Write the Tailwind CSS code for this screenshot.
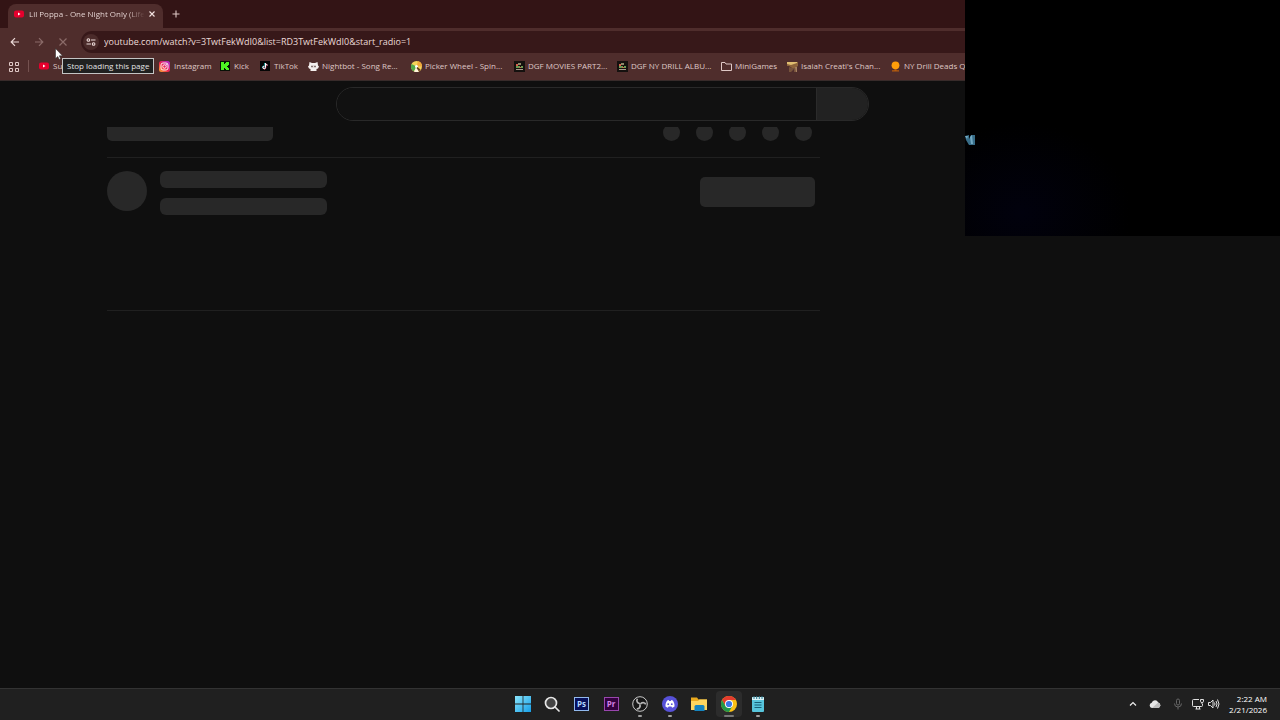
<!DOCTYPE html>
<html lang="en">

<head>
  <meta charset="UTF-8" />
  <meta name="viewport" content="width=device-width, initial-scale=1.0" />
  <script src="https://cdn.jsdelivr.net/npm/@tailwindcss/browser@4"></script>
  <title>Lil Poppa - One Night Only</title>
</head>

<body class="bg-[#0f0f0f] font-['Open_Sans','Noto_Sans',sans-serif] text-[8px] leading-3 text-[#dfc8c6]">
  <div class="relative flex min-h-screen flex-col overflow-hidden">

    <!-- tab strip -->
    <div class="flex h-7 items-end bg-[#331415] pl-2">
      <div class="flex h-6 w-[155px] items-center rounded-t-lg bg-[#4f2d2c] pr-[7px] pb-1 pl-[6px]">
        <svg class="h-[10px] w-[10px] shrink-0" viewBox="0 0 20 20">
          <rect x="0" y="3" width="20" height="14" rx="4" fill="#e6002d" />
          <path d="M8 7l5 3-5 3z" fill="#fff" />
        </svg>
        <span class="ml-[5px] bg-linear-to-r from-[#f3e3e1] from-85% to-[#4f2d2c] bg-clip-text whitespace-nowrap text-transparent">Lil Poppa - One Night Only (Life</span>
        <button type="button" aria-label="Close tab" class="ml-auto">
          <svg class="h-2 w-2" viewBox="0 0 8 8" fill="none" stroke="#f3e3e1" stroke-width="1.1">
            <path d="M1.500 1.500l5 5M6.500 1.500l-5 5" />
          </svg>
        </button>
      </div>
      <button type="button" aria-label="New tab" class="mb-[9px] ml-2">
        <svg class="h-[10px] w-[10px]" viewBox="0 0 10 10" fill="none" stroke="#dfc8c6" stroke-width="1.1">
          <path d="M5 1.500v7M1.500 5h7" />
        </svg>
      </button>
    </div>

    <!-- toolbar -->
    <div class="flex h-7 items-center bg-[#4f2d2c] pl-[9px]">
      <button type="button" aria-label="Back" class="mr-3">
        <svg class="h-3 w-3" viewBox="0 0 12 12" fill="none" stroke="#ecdad8" stroke-width="1.200">
          <path d="M10 6H2.500M6 2.200L2.200 6 6 9.800" />
        </svg>
      </button>
      <button type="button" aria-label="Forward" class="mr-3">
        <svg class="h-3 w-3" viewBox="0 0 12 12" fill="none" stroke="#8b6b69" stroke-width="1.200">
          <path d="M2 6h7.500M6 2.200L9.800 6 6 9.800" />
        </svg>
      </button>
      <button type="button" aria-label="Stop" class="mr-3">
        <svg class="h-3 w-3" viewBox="0 0 12 12" fill="none" stroke="#8b6b69" stroke-width="1.200">
          <path d="M2.500 2.500l7 7M9.500 2.500l-7 7" />
        </svg>
      </button>
      <div class="flex h-[22px] flex-1 items-center rounded-l-full bg-[#371819] pl-[2px]">
        <button type="button" aria-label="Site information" class="flex h-4 w-4 items-center justify-center rounded-full bg-[#4b2b2a]">
          <svg class="h-[10px] w-[10px]" viewBox="0 0 10 10" fill="none" stroke="#ecdad8" stroke-width="1.100">
            <path d="M5 3h4.500M.5 7H5" />
            <circle cx="2.400" cy="3" r="1.300" />
            <circle cx="7.600" cy="7" r="1.300" />
          </svg>
        </button>
        <input type="text" aria-label="Address" class="ml-[5px] w-[420px] bg-transparent text-[9px] leading-4 text-[#ecdad8] outline-none"
          value="youtube.com/watch?v=3TwtFekWdI0&amp;list=RD3TwtFekWdI0&amp;start_radio=1" />
      </div>
    </div>

    <!-- bookmarks -->
    <nav class="flex h-[25px] items-center border-b border-[#382b2a] bg-[#4f2d2c] pb-1 pl-2 whitespace-nowrap">
      <button type="button" aria-label="Apps">
        <svg class="h-[11px] w-[11px]" viewBox="0 0 11 11" fill="none" stroke="#dfc8c6">
          <path d="M1.500 1.500h3v3h-3zM7.500 1.500h3v3h-3zM1.500 7.500h3v3h-3zM7.500 7.500h3v3h-3z" />
        </svg>
      </button>
      <span class="mr-[10px] ml-[9px] h-3 w-px bg-[#755250]"></span>
      <div class="flex gap-[11px]">
        <a href="#" class="flex w-[109px] items-center gap-1">
          <svg class="h-[10px] w-[10px]" viewBox="0 0 20 20">
            <rect x="0" y="3" width="20" height="14" rx="4" fill="#e6002d" />
            <path d="M8 7l5 3-5 3z" fill="#fff" />
          </svg>
          <span>Su</span>
        </a>
        <a href="#" class="flex w-[50px] items-center gap-1">
          <svg class="h-[11px] w-[11px] shrink-0" viewBox="0 0 22 22" fill="none" stroke="#fff" stroke-width="1.800">
            <defs>
              <linearGradient id="insta" x1="0" y1="1" x2="1" y2="0">
                <stop offset="0" stop-color="#ffb52e" />
                <stop offset=".45" stop-color="#f0254f" />
                <stop offset="1" stop-color="#a52bdc" />
              </linearGradient>
            </defs>
            <rect width="22" height="22" rx="5" fill="url(#insta)" stroke="none" />
            <rect x="4" y="4" width="14" height="14" rx="4" />
            <circle cx="11" cy="11" r="3.500" />
            <circle cx="15.200" cy="6.800" r=".6" />
          </svg>
          <span>Instagram</span>
        </a>
        <a href="#" class="flex w-[29px] items-center gap-1">
          <svg class="h-[10px] w-[10px] shrink-0" viewBox="0 0 10 10">
            <rect width="10" height="10" fill="#071006" />
            <path d="M1 1h3v2h1V2h1V1h3v3H8v1H7v1h1v1h1v2H6V8H5V7H4v2H1z" fill="#4df322" />
          </svg>
          <span>Kick</span>
        </a>
        <a href="#" class="flex w-[37px] items-center gap-1">
          <svg class="h-[10px] w-[10px] shrink-0" viewBox="0 0 20 20" fill="none" stroke-width="2">
            <rect width="20" height="20" fill="#050505" />
            <path d="M10 4v8.500a2.500 2.500 0 1 1-2.500-2.500M10 4c0 2 2 3.500 4 3.500" stroke="#25e6e0" />
            <path d="M11.500 5v8.500A2.500 2.500 0 1 1 9 11M11.500 5c0 2 2 3.500 4 3.500" stroke="#f22b55" />
            <path d="M11 4.500V13a2.500 2.500 0 1 1-2.500-2.500M11 4.500c0 2 2 3.500 4 3.500" stroke="#fff" />
          </svg>
          <span>TikTok</span>
        </a>
        <a href="#" class="flex w-[92px] items-center gap-[3px]">
          <svg class="h-[11px] w-[11px] shrink-0" viewBox="0 0 22 22">
            <path d="M3 2l5 2h6l5-2 1 7 2 2-2 4-3 1v4H5v-4l-3-1-2-4 2-2z" fill="#f4efee" />
            <path d="M6 8h10v6H6z" fill="#e4dbda" />
            <circle cx="8" cy="11" r="1.300" fill="#3b2524" />
            <circle cx="14" cy="11" r="1.300" fill="#3b2524" />
          </svg>
          <span>Nightbot - Song Re...</span>
        </a>
        <a href="#" class="flex w-[92px] items-center gap-[3px]">
          <svg class="h-[11px] w-[11px] shrink-0" viewBox="0 0 22 22">
            <circle cx="11" cy="11" r="11" fill="#f4d35a" />
            <path d="M11 11L1 6a11 11 0 0 0 5 15z" fill="#51a84b" />
            <path d="M11 11l-5 10a11 11 0 0 0 10 0z" fill="#fff6dd" />
            <path d="M11 11L14 0a11 11 0 0 1 8 11z" fill="#f1a83b" />
            <circle cx="11" cy="11" r="3" fill="#fff" />
            <path d="M13 12l6 5-3 4-5-7z" fill="#623d20" />
          </svg>
          <span>Picker Wheel - Spin...</span>
        </a>
        <a href="#" class="flex w-[92px] items-center gap-[3px]">
          <svg class="h-[11px] w-[11px] shrink-0" viewBox="0 0 11 11">
            <rect width="11" height="11" fill="#15110f" />
            <path d="M2 3h2v2H2z" fill="#d75a4a" />
            <path d="M4 2h3v2H4z" fill="#8f8a69" />
            <path d="M2 5h4v2H2zM7 5h2v2H7z" fill="#6b9c54" />
            <path d="M2 8h7v1H2z" fill="#a99c8b" />
            <path d="M5 6h2v1H5z" fill="#c96d45" />
          </svg>
          <span>DGF MOVIES PART2...</span>
        </a>
        <a href="#" class="flex w-[93px] items-center gap-[3px]">
          <svg class="h-[11px] w-[11px] shrink-0" viewBox="0 0 11 11">
            <rect width="11" height="11" fill="#15110f" />
            <path d="M2 3h2v2H2z" fill="#d75a4a" />
            <path d="M4 2h3v2H4z" fill="#8f8a69" />
            <path d="M2 5h4v2H2zM7 5h2v2H7z" fill="#6b9c54" />
            <path d="M2 8h7v1H2z" fill="#a99c8b" />
            <path d="M5 6h2v1H5z" fill="#c96d45" />
          </svg>
          <span>DGF NY DRILL ALBU...</span>
        </a>
        <a href="#" class="flex w-[55px] items-center gap-[3px]">
          <svg class="h-[11px] w-[11px] shrink-0" viewBox="0 0 11 11" fill="none" stroke="#dfc8c6">
            <path d="M.5 9.500v-8H4l1 1.500h5.500v6.500z" stroke-linejoin="round" />
          </svg>
          <span>MiniGames</span>
        </a>
        <a href="#" class="flex w-[92px] items-center gap-[3px]">
          <svg class="h-[11px] w-[11px] shrink-0" viewBox="0 0 11 11">
            <path d="M0 1h11v4L8 7H5L2 5H0z" fill="#8d633b" />
            <path d="M0 1h10v1L4 4 0 3z" fill="#e0bd70" />
            <path d="M2 6l3 1h4v4H7V8L4 11H2z" fill="#76523b" />
            <path d="M8 6h2v5H9z" fill="#a78262" />
          </svg>
          <span>Isaiah Creati's Chan...</span>
        </a>
        <a href="#" class="flex items-center gap-[3px]">
          <svg class="h-[11px] w-[11px] shrink-0" viewBox="0 0 11 11">
            <circle cx="5.500" cy="4.300" r="3.900" fill="#ff9d0a" />
            <path d="M4.500 8h2v1.300H9V10.500H2V9.300h2.500z" fill="#b85c0c" />
          </svg>
          <span>NY Drill Deads Qu</span>
        </a>
      </div>
    </nav>

    <!-- search header -->
    <header class="h-[46px] pt-[6px] pl-[336px]">
      <form class="flex h-[34px] w-full max-w-[533px] overflow-hidden rounded-full border border-[#292929]">
        <input type="text" aria-label="Search" class="min-w-0 flex-1 bg-[#111111] px-4 outline-none" />
        <button type="button" aria-label="Submit search" class="w-[52px] border-l border-[#2b2b2b] bg-[#222222]"></button>
      </form>
    </header>

    <!-- loading skeleton -->
    <main class="ml-[107px] w-full max-w-[713px] flex-1">
      <div class="flex h-[31px] items-start justify-between border-b border-[#202020] pr-2">
        <div class="h-[14px] w-[166px] rounded-b-[5px] bg-[#282828]"></div>
        <div class="flex h-[14px] items-end gap-4 overflow-hidden">
          <div class="h-[17px] w-[17px] rounded-full bg-[#282828]"></div>
          <div class="h-[17px] w-[17px] rounded-full bg-[#282828]"></div>
          <div class="h-[17px] w-[17px] rounded-full bg-[#282828]"></div>
          <div class="h-[17px] w-[17px] rounded-full bg-[#282828]"></div>
          <div class="h-[17px] w-[17px] rounded-full bg-[#282828]"></div>
        </div>
      </div>
      <div class="flex h-[153px] items-start border-b border-[#202020] pt-[13px] pr-[5px]">
        <div class="h-10 w-10 rounded-full bg-[#282828]"></div>
        <div class="ml-[13px] space-y-[10px]">
          <div class="h-[17px] w-[167px] rounded-md bg-[#282828]"></div>
          <div class="h-[17px] w-[167px] rounded-md bg-[#282828]"></div>
        </div>
        <div class="mt-[6px] ml-auto h-[30px] w-[115px] rounded-[5px] bg-[#282828]"></div>
      </div>
    </main>

    <!-- taskbar -->
    <footer class="relative flex h-8 items-center justify-center border-t border-[#333333] bg-[#202020] pb-[2px] pl-px text-white">
      <div class="grid h-full w-[265px] grid-cols-9 items-center justify-items-center">
        <button type="button" aria-label="Start">
          <svg class="h-4 w-4" viewBox="0 0 16 16">
            <linearGradient id="win" x2="1" y2="1">
              <stop stop-color="#8be5fb" />
              <stop offset="1" stop-color="#169fe8" />
            </linearGradient>
            <path d="M0 0h7.600v7.600H0zM8.400 0H16v7.600H8.400zM0 8.400h7.600V16H0zM8.400 8.400H16V16H8.400z" fill="url(#win)" />
          </svg>
        </button>
        <button type="button" aria-label="Search apps">
          <svg class="h-4 w-4" viewBox="0 0 16 16" fill="#444" stroke="#e6e6e6" stroke-width="1.700">
            <circle cx="7" cy="7" r="5.500" />
            <path d="M11 11l4 4" stroke-linecap="round" />
          </svg>
        </button>
        <button type="button" aria-label="Photoshop" class="flex h-[14px] w-[15px] items-center justify-center border border-[#91b9ed] bg-[#07105b] font-bold text-[#b2d7ff]">Ps</button>
        <button type="button" aria-label="Premiere Pro" class="flex h-[14px] w-[15px] items-center justify-center border border-[#9946ad] bg-[#34003f] font-bold text-[#d382e8]">Pr</button>
        <button type="button" aria-label="OBS" class="relative flex h-full w-full items-center justify-center">
          <svg class="h-4 w-4" viewBox="0 0 16 16" fill="none">
            <circle cx="8" cy="8" r="7.300" fill="#171717" stroke="#c9c9c9" />
            <g stroke="#b5b5b5" stroke-width="1.700">
              <path d="M5.500 2.800a2.900 2.900 0 0 0 2.500 4.700" />
              <path d="M5.500 2.800a2.900 2.900 0 0 0 2.500 4.700" transform="rotate(120 8 8)" />
              <path d="M5.500 2.800a2.900 2.900 0 0 0 2.500 4.700" transform="rotate(240 8 8)" />
            </g>
          </svg>
          <span class="absolute bottom-[1px] h-[2px] w-1 rounded-full bg-[#a0a0a0]"></span>
        </button>
        <button type="button" aria-label="Discord" class="relative flex h-full w-full items-center justify-center">
          <svg class="h-4 w-4" viewBox="0 0 16 16">
            <circle cx="8" cy="8" r="8" fill="#5751d8" />
            <path d="M5.200 4.500l1.500-.4.500.8h1.600l.5-.8 1.500.4c1.400 2 1.900 3.900 1.700 6-.8.7-1.600 1-2.400 1.200l-.7-1.200H6.600l-.7 1.200c-.8-.2-1.600-.5-2.400-1.200-.2-2.100.3-4 1.700-6z" fill="#fff" />
            <circle cx="6.200" cy="8.200" r=".9" fill="#5751d8" />
            <circle cx="9.800" cy="8.200" r=".9" fill="#5751d8" />
          </svg>
          <span class="absolute bottom-[1px] h-[2px] w-1 rounded-full bg-[#a0a0a0]"></span>
        </button>
        <button type="button" aria-label="File Explorer">
          <svg class="h-4 w-4" viewBox="0 0 16 16">
            <path d="M0 1.500h6l1.500 2H16V14H0z" fill="#e9a91e" />
            <path d="M0 5l7-.1 1.500-1.400H16V14H0z" fill="#ffd75e" />
            <path d="M3.500 15v-4.500q0-1.500 1.500-1.500h7q1.500 0 1.500 1.500V15z" fill="#1685bf" />
          </svg>
        </button>
        <button type="button" aria-label="Chrome" class="relative flex h-[26px] w-[26px] items-center justify-center rounded bg-[#2c2c2c]">
          <svg class="h-4 w-4" viewBox="0 0 16 16">
            <circle cx="8" cy="8" r="8" fill="#fbc116" />
            <path d="M1.070 4A8 8 0 0 1 14.930 4H8L4.540 10z" fill="#e33b2e" />
            <path d="M1.070 4A8 8 0 0 0 8 16l3.460-6L8 11.500 4.540 10z" fill="#23984a" />
            <circle cx="8" cy="8" r="4" fill="#fff" />
            <circle cx="8" cy="8" r="3.100" fill="#3b78e7" />
          </svg>
          <span class="absolute bottom-0 h-[2px] w-[10px] rounded-full bg-[#777777]"></span>
        </button>
        <button type="button" aria-label="Notepad" class="relative flex h-full w-full items-center justify-center">
          <svg class="h-4 w-4" viewBox="0 0 16 16">
            <rect x="2" y="1" width="12" height="15" rx="1" fill="#57c5dc" />
            <path d="M2 2q0-1 1-1h10q1 0 1 1v2H2z" fill="#d9f3f8" />
            <path d="M4 0v3M6.700 0v3M9.300 0v3M12 0v3" stroke="#287a91" />
            <path d="M4.500 6.500h7M4.500 9h7M4.500 11.500h7" stroke="#176178" stroke-width="1.200" />
          </svg>
          <span class="absolute bottom-[1px] h-[2px] w-1 rounded-full bg-[#a0a0a0]"></span>
        </button>
      </div>

      <!-- system tray -->
      <div class="absolute top-0 right-[13px] bottom-[2px] flex items-center">
        <svg class="mr-3 h-2 w-2" viewBox="0 0 8 8" fill="none" stroke="#eee" stroke-width="1.200">
          <path d="M1 5.500l3-3 3 3" />
        </svg>
        <svg class="mr-3 h-3 w-3" viewBox="0 0 12 12">
          <path d="M3 10a2.700 2.700 0 0 1-.3-5.300 3.500 3.500 0 0 1 6.500-.3A2.900 2.900 0 0 1 9.200 10z" fill="#e6e6e6" />
          <path d="M3 10l6.200-5.600A2.900 2.900 0 0 1 9.200 10z" fill="#bdbdbd" />
        </svg>
        <svg class="mr-[9px] h-3 w-[10px]" viewBox="0 0 10 12" fill="none" stroke="#666">
          <rect x="3.500" y="1" width="3" height="6" rx="1.500" />
          <path d="M1.500 5.500q0 3.500 3.500 3.500t3.500-3.500M5 9v2.500" />
        </svg>
        <svg class="mr-1 h-3 w-3" viewBox="0 0 12 12" fill="none" stroke="#e0e0e0">
          <path d="M7 1.500H1.500q-1 0-1 1v5q0 1 1 1h8q1 0 1-1V6M3.500 11h5M4.500 8.500V11M7.500 8.500V11" />
          <path d="M8.500 1.500h3v2q0 1-1.500 1t-1.500-1zM10 4.500V6" />
        </svg>
        <svg class="mr-[9px] h-3 w-3" viewBox="0 0 12 12" fill="none" stroke="#e0e0e0">
          <path d="M.5 4.500h2L5 2v8L2.500 7.500h-2zM6.500 4.500q1 1.500 0 3M8 3q2 3 0 6M9.500 1.500q3 4.500 0 9" />
        </svg>
        <div class="text-right text-[8px] leading-[11px]">
          <div>2:22 AM</div>
          <div>2/21/2026</div>
        </div>
      </div>
    </footer>

    <!-- camera feed over the page -->
    <div class="absolute top-0 right-0 h-[236px] w-[315px] bg-black bg-radial-[at_18%_90%] from-[#01010d] to-black to-30%">
      <svg class="mt-[134px] h-3 w-[11px]" viewBox="0 0 11 12">
        <path d="M0 2l4-1v4l2-4 4 0v10l-6 0L1 6z" fill="#386d88" />
        <path d="M5 3l2-2 1 9H6zM0 2h3L2 5z" fill="#72a9c3" />
      </svg>
    </div>

    <div role="tooltip" class="absolute top-[58px] left-[62px] border border-[#c4c4c4] bg-[#202020] px-1 py-px text-[8px] whitespace-nowrap text-[#e4e4e4]">Stop loading this page</div>

    <!-- pointer -->
    <svg class="absolute top-[48px] left-[55px] h-3 w-2" viewBox="0 0 8 12">
      <path d="M.5.500v10l2.300-2 1.400 3 1.500-.7-1.400-3H7.500z" fill="#fff" stroke="#222" stroke-width=".5" />
    </svg>
  </div>
</body>

</html>
